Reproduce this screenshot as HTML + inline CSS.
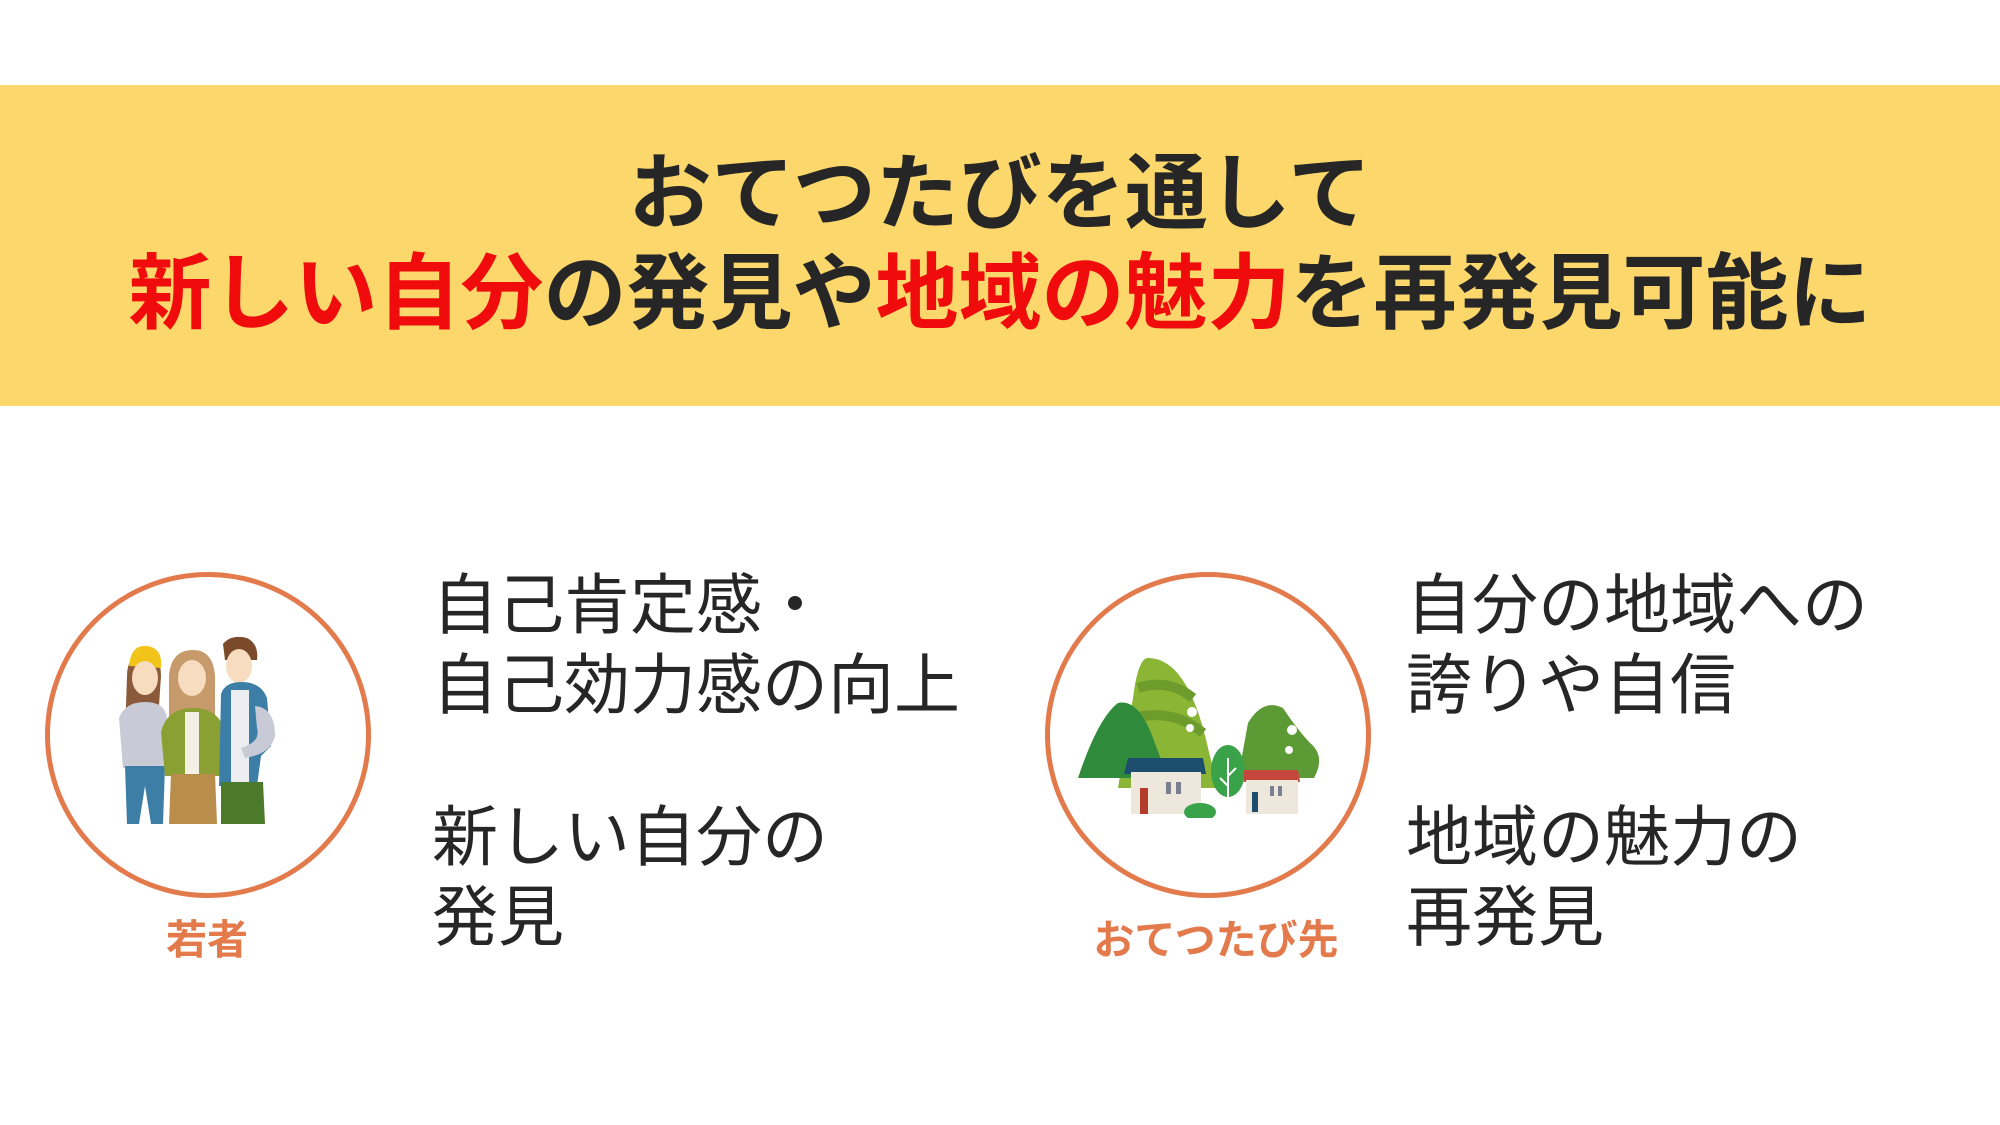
<!DOCTYPE html>
<html><head><meta charset="utf-8"><style>
html,body{margin:0;padding:0;width:2000px;height:1125px;background:#fff;overflow:hidden;position:relative;font-family:"Liberation Sans","Noto Sans CJK JP",sans-serif}
.band{position:absolute;left:0;top:85px;width:2000px;height:321px;background:#fcd86c}
.t{position:absolute;left:0;width:2000px;text-align:center;font-weight:700;font-size:83px;color:#262626;line-height:1;white-space:nowrap}
.r{color:#f00c0c}
.c{position:absolute;width:326px;height:326px;border:5px solid #e37a4b;border-radius:50%;box-sizing:border-box}
.lbl{position:absolute;font-weight:700;color:#e37a4b;font-size:41px;line-height:1;text-align:center;width:300px}
.tx{position:absolute;font-size:66px;color:#262626;line-height:80px;font-weight:400;white-space:nowrap}
</style></head><body>
<div class="band"></div>
<div class="t" style="top:152px">おてつたびを通して</div>
<div class="t" style="top:252px"><span class="r">新しい自分</span>の発見や<span class="r">地域の魅力</span>を再発見可能に</div>

<div class="c" style="left:45px;top:572px"></div>
<svg style="position:absolute;left:105px;top:636px" width="200" height="195" viewBox="0 0 200 195">
<path d="M22 40 Q22 18 40 18 Q56 18 56 40 L52 100 L20 100Z" fill="#8a5a3a"/>
<path d="M24 30 Q26 8 42 10 Q58 12 56 32Z" fill="#f2c419"/>
<ellipse cx="40" cy="42" rx="13" ry="17" fill="#f7dcc0"/>
<path d="M14 82 Q20 66 40 66 Q60 66 62 82 L64 132 L18 132Z" fill="#c8cbd6"/>
<path d="M20 130 L60 130 L58 188 L46 188 L40 150 L34 188 L22 188Z" fill="#3d7ea6"/>
<path d="M64 40 Q66 14 88 14 Q108 14 110 40 L110 90 L64 90Z" fill="#c69a6a"/>
<ellipse cx="87" cy="42" rx="14" ry="18" fill="#f7dcc0"/>
<path d="M56 96 Q62 72 88 72 Q114 72 120 96 L116 140 L60 140Z" fill="#8aa033"/>
<rect x="80" y="76" width="14" height="66" fill="#f4f0e6"/>
<path d="M66 138 L110 138 L112 188 L64 188Z" fill="#b98d4c"/>
<path d="M118 8 Q126 -2 142 2 Q154 8 152 24 L120 24Z" fill="#7a4a2a"/>
<ellipse cx="134" cy="30" rx="13" ry="17" fill="#f7dcc0"/>
<path d="M116 58 Q120 46 136 46 Q156 46 162 62 L166 110 L156 120 L152 150 L114 150Z" fill="#3d7ea6"/>
<rect x="126" y="54" width="18" height="96" fill="#eceef2"/>
<path d="M150 70 Q170 72 170 100 Q166 118 140 122 L136 112 Q156 106 152 92Z" fill="#c8cbd6"/>
<path d="M116 146 L158 146 L160 188 L116 188Z" fill="#4a7a2a"/>
</svg>
<div class="lbl" style="left:57px;top:920px">若者</div>

<div class="tx" style="left:432px;top:565px">自己肯定感・<br>自己効力感の向上</div>
<div class="tx" style="left:432px;top:797px">新しい自分の<br>発見</div>

<div class="c" style="left:1045px;top:572px"></div>
<svg style="position:absolute;left:1078px;top:658px" width="265" height="160" viewBox="0 0 265 160">
<path d="M70 0 Q110 0 130 90 L140 130 L40 130 L55 40 Q60 0 70 0Z" fill="#8ab535"/>
<path d="M60 30 Q90 20 115 40 M55 60 Q95 50 125 75" stroke="#6e9c2c" stroke-width="10" fill="none"/>
<path d="M0 120 Q20 60 40 45 Q60 40 75 80 L90 120Z" fill="#2f8a3c"/>
<path d="M160 120 L170 65 Q185 40 205 50 Q218 70 232 85 Q248 98 236 120Z" fill="#5b9a35"/>
<circle cx="114" cy="54" r="5" fill="#fff"/><circle cx="112" cy="70" r="4" fill="#fff"/>
<circle cx="214" cy="72" r="5" fill="#fff"/><circle cx="211" cy="92" r="4" fill="#fff"/>
<path d="M50 100 L125 100 L128 116 L46 116Z" fill="#1d4e6e"/>
<rect x="53" y="114" width="70" height="42" fill="#eee8dc"/>
<rect x="62" y="130" width="8" height="26" fill="#b53a2e"/>
<rect x="88" y="124" width="5" height="12" fill="#7a8090"/><rect x="98" y="124" width="5" height="12" fill="#7a8090"/>
<ellipse cx="150" cy="113" rx="17" ry="26" fill="#3aa34a"/>
<path d="M150 100 L150 150 M150 118 L158 110 M150 128 L142 120" stroke="#fff" stroke-width="2"/>
<path d="M166 112 L220 112 L222 124 L166 124Z" fill="#c5473b"/>
<rect x="168" y="122" width="52" height="34" fill="#eee8dc"/>
<rect x="174" y="134" width="6" height="20" fill="#1d4e6e"/>
<rect x="192" y="128" width="4" height="10" fill="#7a8090"/><rect x="200" y="128" width="4" height="10" fill="#7a8090"/>
<ellipse cx="122" cy="154" rx="16" ry="9" fill="#3aa34a"/>
</svg>
<div class="lbl" style="left:1066px;top:920px">おてつたび先</div>

<div class="tx" style="left:1406px;top:565px">自分の地域への<br>誇りや自信</div>
<div class="tx" style="left:1406px;top:797px">地域の魅力の<br>再発見</div>
</body></html>
